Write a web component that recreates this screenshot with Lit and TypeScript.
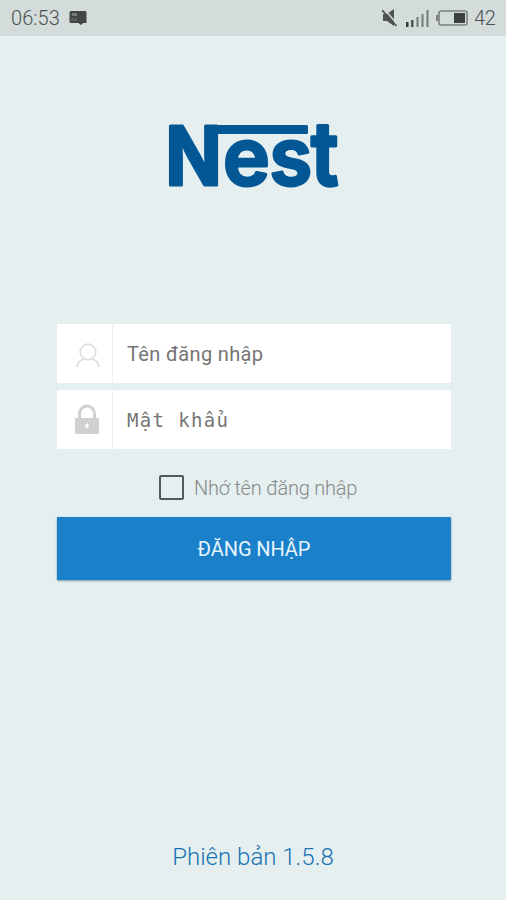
import { LitElement, html, css } from "lit";
import { customElement } from "lit/decorators.js";

@customElement("status-bar")
class StatusBar extends LitElement {
  static styles = css`
    :host { display: flex; align-items: center; height: 36px; box-sizing: border-box;
      padding: 0 10px 0 11px; background: #d4dcdb; color: #4b5251;
      font: 300 20px/36px Roboto, sans-serif; }
    .time { width: 49px; white-space: nowrap; letter-spacing: 0.05px; }
    .msg { margin-left: 9px; }
    .right { display: flex; align-items: center; margin-left: auto; }
    .level { width: 22px; letter-spacing: -0.3px; margin-left: 4px; }
    svg { display: block; }
  `;
  render() {
    return html`
      <span class="time">06:53</span>
      <svg class="msg" width="18" height="14" viewBox="0 0 18 14">
        <path d="M1.5 0H16.5L17.5 1V12H14L12 14L9.5 12H1.5L.5 11V1Z" fill="#414746"/>
        <path d="M3 2H8V5H3Z" fill="#747c7b"/>
        <path d="M2 7H8V10H2Z" fill="#565d5c"/>
      </svg>
      <div class="right">
        <svg width="88" height="24" viewBox="0 0 88 24">
          <path d="M1 8H5L12 3V20L5 15H1Z" fill="#4c5352"/>
          <path d="M2.500 3.500L15.500 18.500" stroke="#d4dcdb" stroke-width="1.5"/>
          <path d="M0 4L14.5 20" stroke="#4c5352" stroke-width="1.6"/>
          <path d="M24 16H26.500V21H24Z" fill="#343a39"/>
          <path d="M29 14H31.500V21H29Z" fill="#505756"/>
          <path d="M34.500 11H36.500V21H34.500Z" fill="#737a79"/>
          <path d="M39.500 8H41.500V21H39.500Z" fill="#737a79"/>
          <path d="M44.500 4H46.500V21H44.500Z" fill="#737a79"/>
          <rect x="57" y="5" width="28" height="14" rx="2" fill="none" stroke="#7a8180" stroke-width="1.6"/>
          <path d="M54 9H56.500V15H54Z" fill="#7a8180"/>
          <path d="M72 7H83V17H72Z" fill="#3b4140"/>
        </svg>
        <span class="level">42</span>
      </div>`;
  }
}

@customElement("nest-logo")
class NestLogo extends LitElement {
  static styles = css`
    :host { display: block; width: 172px; height: 66px; }
    svg { display: block; overflow: visible; }
    text { font: 600 80px Inter, sans-serif; }
    .bold { font-weight: 700; }
    .ink { fill: #035795; stroke: #035795; stroke-width: 3; stroke-linejoin: round; }
  `;
  render() {
    return html`<svg width="172" height="66" viewBox="168 122 172 66" role="img" aria-label="Nest">
      <g class="ink">
        <text class="bold" transform="translate(165.500 184.700) scale(.92 1.010)">N</text>
        <path d="M209 126.500H306.500V132.500H209Z"/>
        <text transform="translate(223 185) scale(.99 .990)">e</text>
        <text transform="translate(269.500 185) scale(.97 .990)">s</text>
        <text transform="translate(311 184.700) scale(.97 1.100)">t</text>
      </g>
    </svg>`;
  }
}

@customElement("app-root")
class AppRoot extends LitElement {
  static styles = css`
    :host { display: flex; flex-direction: column; height: 900px; box-sizing: border-box;
      background: #e6efef; font-family: Roboto, sans-serif; overflow: hidden; }
    nest-logo { margin: 86px 0 0 168px; }
    .form { margin: 136px 55px 0 57px; display: flex; flex-direction: column; }
    .field { display: flex; height: 59px; background: #fff; }
    .field + .field { margin-top: 7px; }
    .icon { width: 56px; border-right: 1px solid #edf1f1; display: flex; align-items: center;
      justify-content: center; padding: 3px 0 0 6px; box-sizing: border-box; }
    .lock { padding: 0 0 1px 5px; }
    .label { padding-left: 14px; line-height: 60px; font-size: 20px; color: #747474; white-space: nowrap; }
    .name { letter-spacing: 0.350px; }
    .mono { font-family: "DejaVu Sans Mono", monospace; font-size: 19px; letter-spacing: 1.350px; }
    .remember { display: flex; align-items: center; height: 68px; padding: 9px 0 0 102px; box-sizing: border-box; }
    .box { width: 25px; height: 25px; border: 2.500px solid #545958; border-radius: 2px; box-sizing: border-box; }
    .check { margin-left: 10px; font-size: 20px; font-weight: 300; letter-spacing: -0.220px; color: #858a8a; white-space: nowrap; }
    .submit { height: 63px; border: 0; padding: 2px 0 0; background: #1a80ca; color: #e5f4fc;
      font: 400 20px/61px Roboto, sans-serif; letter-spacing: -0.080px; box-shadow: 0 1px 2px #829ba8; text-align: center; }
    .version { margin: auto 0 27px; text-align: center; font-size: 24px; line-height: 32px;
      font-weight: 300; color: #1773b3; }
    svg { display: block; }
  `;
  render() {
    return html`
      <status-bar></status-bar>
      <nest-logo></nest-logo>
      <div class="form">
        <div class="field">
          <div class="icon">
            <svg width="24" height="25" viewBox="0 0 24 25" fill="none" stroke="#dedede" stroke-width="1.7">
              <circle cx="12" cy="9" r="7.800"/>
              <path d="M1 24C2 19 4.500 17 8 15.800M16 15.800C19.500 17 22 19 23 24"/>
            </svg>
          </div>
          <div class="label name">Tên đăng nhập</div>
        </div>
        <div class="field">
          <div class="icon lock">
            <svg width="24" height="30" viewBox="0 0 24 30">
              <path d="M4.500 15V9.500A7.500 7.500 0 0 1 19.500 9.500V15" fill="none" stroke="#d0d0d0" stroke-width="3"/>
              <rect y="14" width="24" height="16" rx="1" fill="#d0d0d0"/>
              <path d="M12 19L14 21.500L12.800 24H11.200L10 21.500Z" fill="#fff"/>
            </svg>
          </div>
          <div class="label mono">Mật khẩu</div>
        </div>
        <div class="remember"><span class="box"></span><span class="check">Nhớ tên đăng nhập</span></div>
        <button class="submit">ĐĂNG NHẬP</button>
      </div>
      <div class="version">Phiên bản 1.5.8</div>`;
  }
}
